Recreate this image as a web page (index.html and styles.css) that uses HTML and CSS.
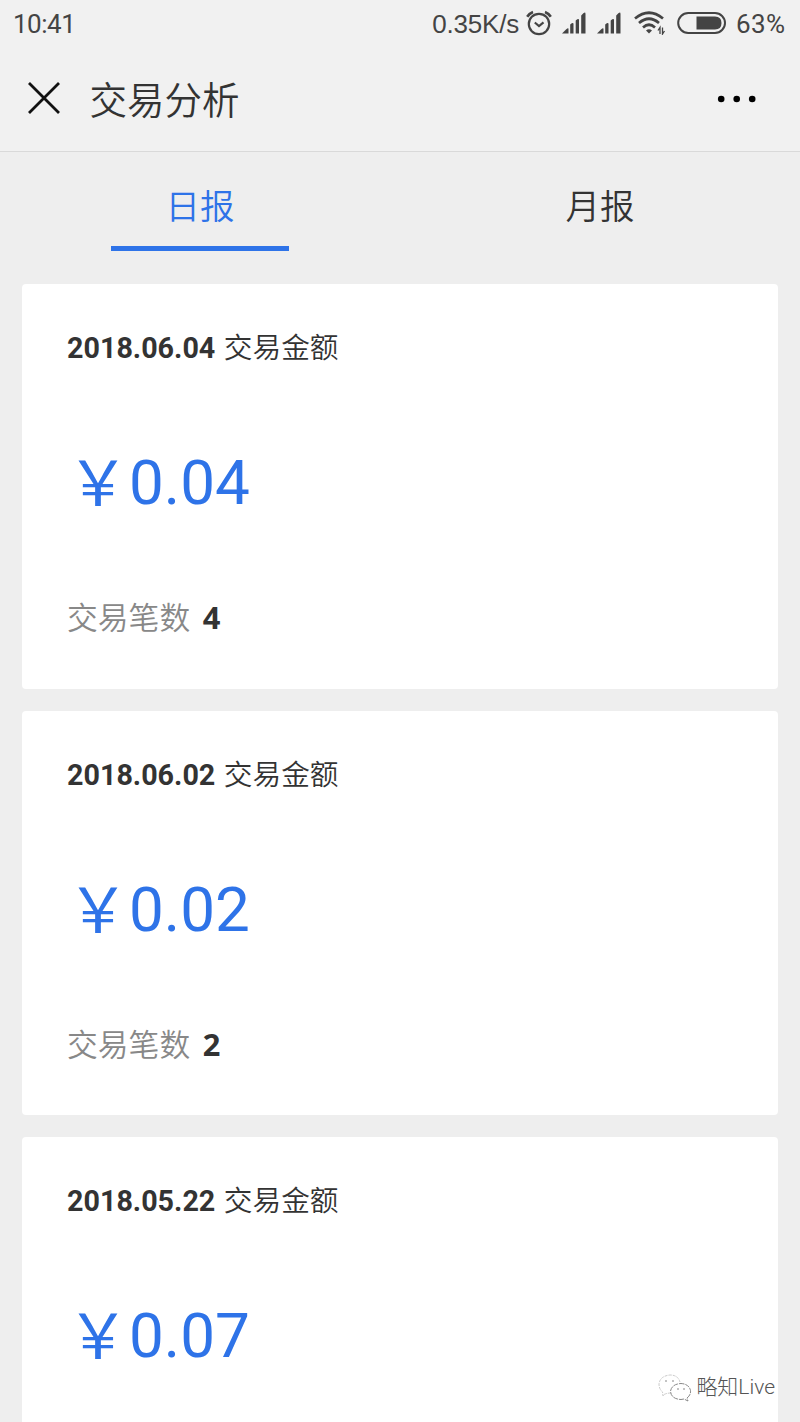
FILE: index.html
```html
<!DOCTYPE html>
<html lang="zh-CN">
<head>
    <meta charset="UTF-8">
    <meta name="viewport" content="width=device-width, initial-scale=1.0">
    <title>交易分析</title>
    <link rel="stylesheet" href="styles.css">
</head>
<body>

    <!-- Status bar -->
    <div class="status-bar">
        <span class="time">10:41</span>
        <span class="speed">0.35K/s</span>
        <svg class="alarm" width="26" height="26" viewBox="0 0 26 26" fill="none" stroke="#444" stroke-width="2.2">
            <circle cx="13" cy="14" r="10.2"/>
            <path d="M1.2 6.8Q3.5 3.3 7 2M24.8 6.8Q22.5 3.3 19 2" stroke-width="2.6"/>
            <path d="M8.8 12.5L13 16L17.5 12.3"/>
        </svg>
        <svg class="signal" width="24" height="22" viewBox="0 0 24 22" fill="#444">
            <path d="M0 21.5L4 17.5Q6.5 15.5 6.5 17V21.5zM8.2 12.5Q11.5 10 11.5 12V21.5H8.2zM13.7 8.5Q17 6 17 8V21.5H13.7zM19.2 3.5Q23.5 -1.5 23.5 2V21.5H19.2z"/>
        </svg>
        <svg class="signal" width="24" height="22" viewBox="0 0 24 22" fill="#444">
            <path d="M0 21.5L4 17.5Q6.5 15.5 6.5 17V21.5zM8.2 12.5Q11.5 10 11.5 12V21.5H8.2zM13.7 8.5Q17 6 17 8V21.5H13.7zM19.2 3.5Q23.5 -1.5 23.5 2V21.5H19.2z"/>
        </svg>
        <svg class="wifi" width="32" height="25" viewBox="0 0 32 25" fill="none" stroke="#444" stroke-width="2.7">
            <path d="M1 8.5Q15 -3 29 8.5M5 13Q15 4.5 25 13M9 17.5Q15 12 21 17.5"/>
            <path d="M12 20.5Q15 18 18 20.5L15 23.5z" fill="#444" stroke="none"/>
            <path d="M26 24V17.5L24 20.5M28.5 17.5V24L30.5 21" stroke-width="1.3"/>
        </svg>
        <svg class="battery" width="50" height="24" viewBox="0 0 50 24">
            <rect x="1.2" y="2" width="46.8" height="20" rx="10" fill="none" stroke="#444" stroke-width="2"/>
            <path d="M19.5 5.5H38Q44.5 5.5 44.5 12T38 18.5H19.5z" fill="#444"/>
        </svg>
        <span class="percent">63%</span>
    </div>

    <!-- Title bar -->
    <div class="title-bar">
        <svg class="close" width="32" height="32" viewBox="0 0 32 32" stroke="#111" stroke-width="2.8">
            <path d="M1 1L31 31M31 1L1 31"/>
        </svg>
        <h1>交易分析</h1>
        <svg class="more" width="40" height="8" viewBox="0 0 40 8" fill="#000">
            <circle cx="4.2" cy="4" r="3.3"/>
            <circle cx="19.7" cy="4" r="3.3"/>
            <circle cx="35.2" cy="4" r="3.3"/>
        </svg>
    </div>

    <div class="tabs">
        <div class="tab active"><span>日报</span></div>
        <div class="tab"><span>月报</span></div>
    </div>

    <!-- Daily reports -->
    <div class="list">
        <div class="card">
            <p class="date"><b>2018.06.04</b> 交易金额</p>
            <p class="amount"><span>￥</span>0.04</p>
            <p class="count">交易笔数 <b>4</b></p>
        </div>
        <div class="card">
            <p class="date"><b>2018.06.02</b> 交易金额</p>
            <p class="amount"><span>￥</span>0.02</p>
            <p class="count">交易笔数 <b>2</b></p>
        </div>
        <div class="card last">
            <p class="date"><b>2018.05.22</b> 交易金额</p>
            <p class="amount"><span>￥</span>0.07</p>
        </div>
    </div>

    <div class="watermark">
        <svg width="34" height="30" viewBox="0 0 34 30" fill="none" stroke="#888" stroke-width="1">
            <path d="M13 21Q9 21 6 22.5L5 24L4.5 20Q1 17 1 12Q2 4 12 3Q20 3 22 10" stroke="#ccc" stroke-dasharray="3 1"/>
            <path d="M29 26Q33 23 32.5 18.5Q31 12 23 11.5Q14 12 12.5 19Q13 27 23 27.5L26 27L30 29z" stroke-dasharray="5 1"/>
            <path d="M7 9h2M14 9h2M19 17h2M25 17h2"/>
        </svg>
        <span>略知Live</span>
    </div>

</body>
</html>
```
FILE: styles.css
```css
* {
    box-sizing: border-box;
}

body {
    margin: 0;
    height: 1422px;
    position: relative;
    background-color: #eeeeee;
    color: #333;
    font-family: Roboto, "Noto Sans CJK SC", sans-serif;
}

h1,
p {
    margin: 0;
    font-weight: normal;
}

.status-bar {
    display: flex;
    align-items: center;
    height: 46px;
    padding: 0 14px 1px 13px;
    background-color: #f1f1f1;
    color: #444;
    font-size: 26px;
    line-height: 30px;
    white-space: nowrap;
}

.status-bar span {
    padding-top: 2px;
}

.time {
    margin-right: auto;
    letter-spacing: -0.5px;
}

.speed {
    margin-right: 7px;
    font-family: "Liberation Sans", Arial, sans-serif;
    font-size: 26px;
    letter-spacing: -0.2px;
}

.alarm {
    margin-right: 10px;
}

.signal {
    margin-right: 11px;
}

.wifi {
    margin-left: 2px;
    margin-right: 11px;
}

.battery {
    margin-right: 9px;
}

.percent {
    width: 50px;
    letter-spacing: 0.4px;
}

.title-bar {
    display: flex;
    align-items: center;
    height: 106px;
    padding: 0 43px 0 28px;
    background-color: #f1f1f1;
    border-bottom: 1px solid #d9d9d9;
}

.close {
    margin-bottom: 2px;
}

.title-bar h1 {
    margin-left: 29.5px;
    padding-top: 4px;
    font-size: 37.5px;
    line-height: 50px;
    font-weight: 350;
}

.more {
    margin-left: auto;
}

.tabs {
    display: flex;
    height: 132px;
}

.tab {
    flex: 1;
    display: flex;
    justify-content: center;
    font-size: 34.5px;
    line-height: 50px;
    font-weight: 350;
}

.tab span {
    width: 178px;
    height: 99px;
    padding-top: 30px;
    text-align: center;
}

.tab.active {
    color: #2e73e8;
}

.tab.active span {
    border-bottom: 5px solid #2e73e8;
}

.list {
    display: flex;
    flex-direction: column;
    gap: 22px;
    height: 1138px;
    padding: 0 22px;
}

.card {
    flex: none;
    height: 404.5px;
    padding: 44px 45px 0;
    border-radius: 4px;
    background-color: #fff;
}

.card.last {
    flex: 1;
    height: auto;
    border-radius: 4px 4px 0 0;
}

.date {
    font-size: 28.7px;
    line-height: 40px;
    font-weight: 350;
}

.date b {
    margin-right: 1.5px;
}

b {
    font-weight: 700;
}

.amount {
    height: 100px;
    margin-top: 65px;
    color: #2e73e8;
    font-size: 62px;
    line-height: 100px;
}

.amount span {
    line-height: 1;
    vertical-align: -2px;
}

.count {
    margin-top: 64px;
    color: #888;
    font-size: 30.8px;
    line-height: 40px;
    font-weight: 350;
}

.count b {
    margin-left: 5px;
    color: #333;
    font-family: "Noto Sans", sans-serif;
}

.watermark {
    position: absolute;
    right: 25px;
    bottom: 20px;
    display: flex;
    align-items: center;
    gap: 4px;
    color: #555;
    font-size: 21px;
    line-height: 30px;
    font-weight: 300;
}
```
